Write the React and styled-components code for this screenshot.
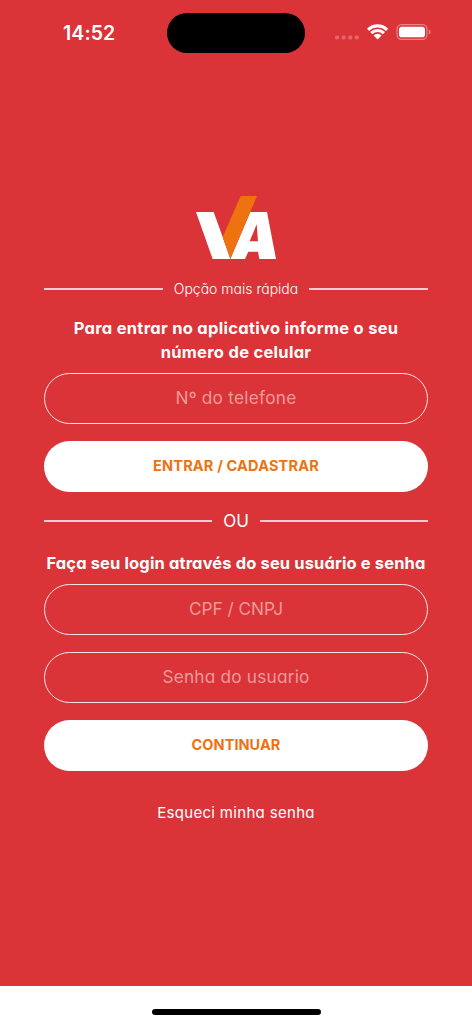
import React from 'react';
import styled, { createGlobalStyle } from 'styled-components';

const GlobalStyle = createGlobalStyle`
  * {
    box-sizing: border-box;
  }
  body {
    margin: 0;
    background: #ffffff;
    font-family: Inter, "Open Sans", sans-serif;
    font-feature-settings: "cv11";
  }
`
const StyledScreen = styled.main`
  display: flex;
  flex-direction: column;
  width: 472px;
  height: 1024px;
  background: #da3438;
  color: #ffffff;
  overflow: hidden;
`
const StyledStatusBar = styled.header`
  display: grid;
  grid-template-columns: 167px 138px 1fr;
  height: 66px;
  flex-shrink: 0;
`
const StyledTime = styled.span`
  padding: 21px 0 0 63px;
  font-size: 19.5px;
  font-weight: 600;
  line-height: 24px;
  letter-spacing: 0.1px;
`
const StyledIsland = styled.div`
  height: 40.5px;
  margin-top: 12.5px;
  border-radius: 21px;
  background: #000000;
`
const StyledStatusIcons = styled.div`
  padding: 22px 0 0 28px;
  svg {
    display: block;
  }
`
const StyledContent = styled.div`
  display: flex;
  flex-direction: column;
  flex: 1;
  padding: 130px 44px 0;
`
const StyledLogo = styled.svg`
  display: block;
  width: 80px;
  height: 63px;
  margin: 0 auto;
`
const StyledDivider = styled.div`
  display: flex;
  align-items: center;
  gap: 11px;
  height: 24px;
  margin-top: ${props => props.$top};
  font-size: ${props => props.$size};
  font-weight: ${props => props.$weight};
  white-space: nowrap;
  span {
    padding-bottom: ${props => props.$lift};
  }
  &::before,
  &::after {
    content: "";
    flex: 1;
    height: 1.5px;
    background: #f6cdce;
  }
`
const StyledTitle = styled.h2`
  margin: ${props => props.$top} -10px 9px;
  font-size: 16.5px;
  font-weight: 700;
  line-height: 24px;
  letter-spacing: ${props => props.$spacing};
  text-align: center;
  white-space: nowrap;
`
const StyledInput = styled.input`
  width: 100%;
  height: 51px;
  margin: 0 0 17px;
  padding: 0 20px 2px;
  border: 1.5px solid #fbe6e6;
  border-radius: 26px;
  outline: none;
  background: transparent;
  color: #ffffff;
  font-family: inherit;
  font-feature-settings: inherit;
  font-size: 17.25px;
  font-weight: 400;
  letter-spacing: ${props => props.$spacing};
  text-align: center;
  &::placeholder {
    color: #ed9a9c;
    opacity: 1;
  }
`
const StyledButton = styled.button`
  width: 100%;
  height: 51px;
  padding: 0 0 2px;
  border: 0;
  border-radius: 26px;
  background: #ffffff;
  color: #ee7210;
  font-family: inherit;
  font-size: 14.5px;
  font-weight: 700;
  letter-spacing: ${props => props.$spacing};
`
const StyledForgotLink = styled.a`
  margin: 30px auto 0;
  font-size: 15px;
  line-height: 24px;
  letter-spacing: 0.32px;
`
const StyledHomeArea = styled.footer`
  height: 38px;
  padding-top: 23px;
  flex-shrink: 0;
  background: #ffffff;
`
const StyledHomeIndicator = styled.div`
  width: 169px;
  height: 6px;
  margin: 0 auto;
  border-radius: 3px;
  background: #000000;
`

function StatusIcons() {
  return (
    <StyledStatusIcons>
      <svg width="100" height="20" viewBox="333 22 100 20" fill="none">
        <g fill="#e4666a">
          <rect x="335" y="35.4" width="4.1" height="4.1" rx="1.4" />
          <rect x="341.6" y="35.4" width="4.1" height="4.1" rx="1.4" />
          <rect x="348.2" y="35.4" width="4.1" height="4.1" rx="1.4" />
          <rect x="354.8" y="35.4" width="4.1" height="4.1" rx="1.4" />
        </g>
        <g stroke="#ffffff" strokeWidth="3.1">
          <path d="M368.1 29.8A13.4 13.4 0 0 1 387.1 29.8" />
          <path d="M371.3 33.1A8.9 8.9 0 0 1 383.9 33.1" />
        </g>
        <path d="M377.6 39.4L373.6 35.4A5.6 5.6 0 0 1 381.6 35.4Z" fill="#ffffff" />
        <rect x="397" y="24.6" width="30" height="14.8" rx="4.6" stroke="#e98588" strokeWidth="1.2" />
        <rect x="399" y="26.7" width="26" height="10.6" rx="2.9" fill="#ffffff" />
        <path d="M428.9 29.6C431.2 30.4 431.2 33.8 428.9 34.6Z" fill="#e98588" />
      </svg>
    </StyledStatusIcons>
  );
}

function Logo() {
  return (
    <StyledLogo viewBox="30 30 240 189" role="img" aria-label="VA">
      <path d="M30 78H83L110 153L133 219H80Z" fill="#ffffff" />
      <path d="M193 78H243L270 219H220L216 197H187L177 219H133ZM212 115L191 166H216Z" fill="#ffffff" fillRule="evenodd" />
      <path d="M164 30H213L133 218L110 153Z" fill="#ee7210" />
    </StyledLogo>
  );
}

function App() {
  return (
    <>
      <GlobalStyle />
      <StyledScreen>
        <StyledStatusBar>
          <StyledTime>14:52</StyledTime>
          <StyledIsland />
          <StatusIcons />
        </StyledStatusBar>
        <StyledContent>
          <Logo />
          <StyledDivider $top="18px" $size="14px" $weight="300" $lift="2px">
            <span>Opção mais rápida</span>
          </StyledDivider>
          <StyledTitle $top="15px" $spacing="0.29px">
            Para entrar no aplicativo informe o seu<br />número de celular
          </StyledTitle>
          <StyledInput type="tel" placeholder="Nº do telefone" $spacing="0.25px" />
          <StyledButton type="button" $spacing="0.18px">ENTRAR / CADASTRAR</StyledButton>
          <StyledDivider $top="17px" $size="17px" $weight="400" $lift="0px">
            <span>OU</span>
          </StyledDivider>
          <StyledTitle $top="18px" $spacing="0.13px">
            Faça seu login através do seu usuário e senha
          </StyledTitle>
          <StyledInput type="text" placeholder="CPF / CNPJ" $spacing="-0.05px" />
          <StyledInput type="password" placeholder="Senha do usuario" $spacing="0.2px" />
          <StyledButton type="button" $spacing="0.05px">CONTINUAR</StyledButton>
          <StyledForgotLink>Esqueci minha senha</StyledForgotLink>
        </StyledContent>
        <StyledHomeArea>
          <StyledHomeIndicator />
        </StyledHomeArea>
      </StyledScreen>
    </>
  );
}

export default App;
